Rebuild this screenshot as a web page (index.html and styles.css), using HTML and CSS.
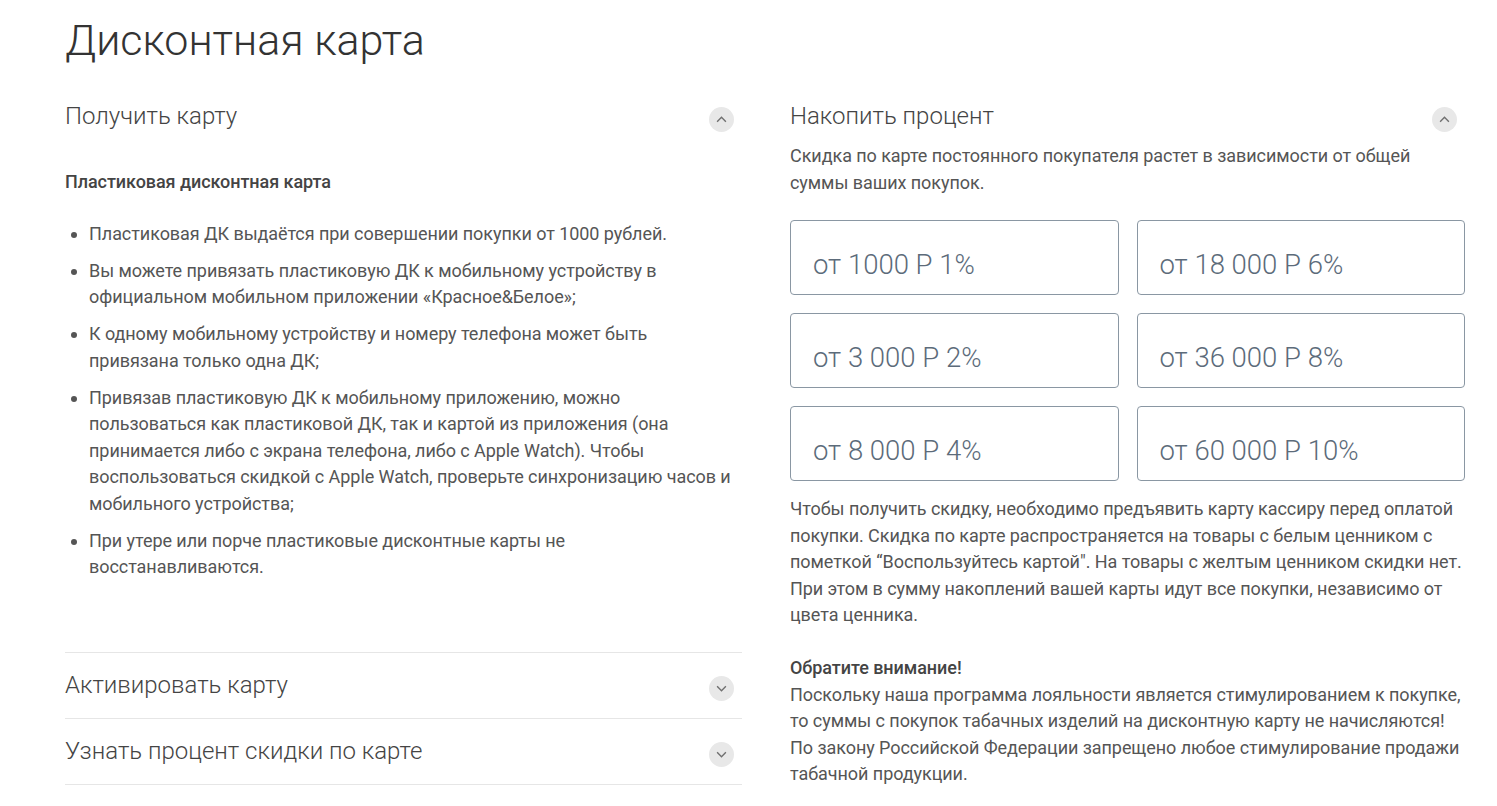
FILE: index.html
```html
<!DOCTYPE html>
<html lang="ru">
<head>
    <meta charset="UTF-8">
    <meta name="viewport" content="width=device-width, initial-scale=1.0">
    <title>Дисконтная карта</title>
    <link rel="stylesheet" href="styles.css">
</head>
<body>
    <div class="page">
        <h1 class="page-title">Дисконтная карта</h1>

        <div class="columns">
            <!-- Left column: accordion -->
            <div class="col">
                <div class="acc-item open">
                    <div class="acc-head">
                        <h2>Получить карту</h2>
                        <span class="toggle">
                            <svg viewBox="0 0 12 8" width="11" height="7"><path d="M1 6.5 L6 1.5 L11 6.5" /></svg>
                        </span>
                    </div>
                    <div class="acc-body">
                        <p class="subtitle">Пластиковая дисконтная карта</p>
                        <ul class="rules">
                            <li>Пластиковая ДК выдаётся при совершении покупки от 1000 рублей.</li>
                            <li>Вы можете привязать пластиковую ДК к мобильному устройству в официальном мобильном приложении «Красное&amp;Белое»;</li>
                            <li>К одному мобильному устройству и номеру телефона может быть привязана только одна ДК;</li>
                            <li>Привязав пластиковую ДК к мобильному приложению, можно пользоваться как пластиковой ДК, так и картой из приложения (она принимается либо с экрана телефона, либо с Apple Watch). Чтобы воспользоваться скидкой с Apple Watch, проверьте синхронизацию часов и мобильного устройства;</li>
                            <li>При утере или порче пластиковые дисконтные карты не восстанавливаются.</li>
                        </ul>
                    </div>
                </div>

                <div class="acc-item">
                    <div class="acc-head">
                        <h2>Активировать карту</h2>
                        <span class="toggle">
                            <svg viewBox="0 0 12 8" width="11" height="7"><path d="M1 1.5 L6 6.5 L11 1.5" /></svg>
                        </span>
                    </div>
                </div>

                <div class="acc-item">
                    <div class="acc-head">
                        <h2>Узнать процент скидки по карте</h2>
                        <span class="toggle">
                            <svg viewBox="0 0 12 8" width="11" height="7"><path d="M1 1.5 L6 6.5 L11 1.5" /></svg>
                        </span>
                    </div>
                </div>
            </div>

            <!-- Right column -->
            <div class="col">
                <div class="acc-item open">
                    <div class="acc-head">
                        <h2>Накопить процент</h2>
                        <span class="toggle">
                            <svg viewBox="0 0 12 8" width="11" height="7"><path d="M1 6.5 L6 1.5 L11 6.5" /></svg>
                        </span>
                    </div>
                    <div class="acc-body">
                        <p class="lead">Скидка по карте постоянного покупателя растет в зависимости от общей суммы ваших покупок.</p>

                        <div class="levels">
                            <div class="level">от 1000 Р 1%</div>
                            <div class="level">от 18 000 Р 6%</div>
                            <div class="level">от 3 000 Р 2%</div>
                            <div class="level">от 36 000 Р 8%</div>
                            <div class="level">от 8 000 Р 4%</div>
                            <div class="level">от 60 000 Р 10%</div>
                        </div>

                        <p class="text">Чтобы получить скидку, необходимо предъявить карту кассиру перед оплатой покупки. Скидка по карте распространяется на товары с белым ценником с пометкой “Воспользуйтесь картой". На товары с желтым ценником скидки нет. При этом в сумму накоплений вашей карты идут все покупки, независимо от цвета ценника.</p>

                        <p class="text"><strong>Обратите внимание!</strong><br>
                        Поскольку наша программа лояльности является стимулированием к покупке, то суммы с покупок табачных изделий на дисконтную карту не начисляются! По закону Российской Федерации запрещено любое стимулирование продажи табачной продукции.</p>
                    </div>
                </div>
            </div>
        </div>
    </div>
</body>
</html>
```

FILE: styles.css
```css
body {
    margin: 0;
    padding: 0;
    font-family: Roboto, "Liberation Sans", sans-serif;
    color: #555;
    background: #fff;
}

.page {
    padding: 0 32px 0 65px;
}

.page-title {
    margin: 0;
    padding-top: 14px;
    font-size: 43px;
    line-height: 52px;
    font-weight: 300;
    color: #333;
}

.columns {
    display: grid;
    grid-template-columns: 677px 675px;
    column-gap: 48px;
    margin-top: 34px;
}

/* accordion */
.acc-item + .acc-item {
    border-top: 1px solid #e6e6e6;
}

.acc-item + .acc-item:last-child {
    border-bottom: 1px solid #e6e6e6;
}

.acc-head {
    display: flex;
    align-items: center;
    justify-content: space-between;
    height: 65px;
}

.acc-item.open > .acc-head {
    height: auto;
}

.acc-head h2 {
    margin: 0;
    font-size: 24px;
    line-height: 32px;
    font-weight: 300;
    color: #444;
}

.toggle {
    display: flex;
    align-items: center;
    justify-content: center;
    width: 25px;
    height: 25px;
    margin: 6px 8px 0 0;
    border-radius: 50%;
    background: #e8e8e8;
}

.toggle svg path {
    fill: none;
    stroke: #6f6f6f;
    stroke-width: 1.6;
}

.acc-body {
    font-size: 18px;
    line-height: 26.5px;
    letter-spacing: -0.06px;
}

.col:first-child .acc-body {
    padding-bottom: 71px;
}

.subtitle {
    margin: 37px 0 0;
    font-weight: 500;
    color: #444;
}

.rules {
    margin: 25px 0 0;
    padding-left: 24px;
    padding-right: 4px;
}

.rules li {
    margin-bottom: 10.5px;
}

.rules li:last-child {
    margin-bottom: 0;
}

.lead {
    margin: 11px 0 0;
}

.levels {
    display: grid;
    grid-template-columns: 1fr 1fr;
    gap: 18px;
    margin-top: 24px;
}

.level {
    height: 75px;
    box-sizing: border-box;
    padding: 27px 0 0 22px;
    border: 1px solid #8a97a3;
    border-radius: 4px;
    font-size: 27.5px;
    line-height: 34px;
    font-weight: 300;
    letter-spacing: 0;
    color: #5c6b7a;
}

.text {
    margin: 15px 0 0;
}

.text + .text {
    margin-top: 26.5px;
}

.text strong {
    font-weight: 500;
    color: #444;
}
```
